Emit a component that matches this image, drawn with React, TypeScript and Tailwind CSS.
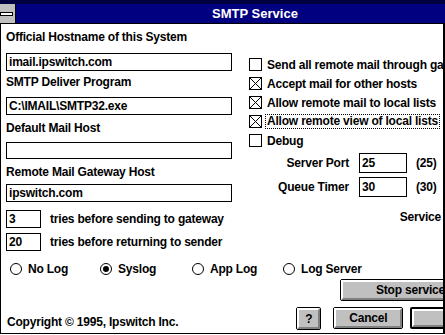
import React from "react";

function Box({ checked }: { checked?: boolean }) {
  return (
    <svg width="13" height="13" viewBox="0 0 13 13" className="shrink-0">
      <rect x="0.5" y="0.5" width="12" height="12" fill="white" stroke="black" />
      {checked && (
        <>
          <line x1="1" y1="1" x2="12" y2="12" stroke="black" strokeWidth="1" />
          <line x1="12" y1="1" x2="1" y2="12" stroke="black" strokeWidth="1" />
        </>
      )}
    </svg>
  );
}

function Radio({ on }: { on?: boolean }) {
  return (
    <svg width="12" height="12" viewBox="0 0 12 12" className="shrink-0">
      <circle cx="6" cy="6" r="5.5" fill="white" stroke="black" strokeWidth="1" />
      {on && <circle cx="6" cy="6" r="3" fill="black" />}
    </svg>
  );
}

function Field({ value, className }: { value?: string; className: string }) {
  return (
    <div className={`h-[18px] border border-black bg-white flex items-center pl-[2px] whitespace-nowrap ${className}`}>
      {value}
    </div>
  );
}

function Btn({ children, className, def }: { children?: React.ReactNode; className: string; def?: boolean }) {
  return (
    <div className={`${def ? "border-2" : "border"} border-black rounded-[2px] bg-[#c0c0c0] flex ${className}`}>
      <div className="flex-1 flex items-center border-2 border-t-white border-l-white border-r-[#808080] border-b-[#808080]">
        {children}
      </div>
    </div>
  );
}

export default function App() {
  return (
    <div className="w-[445px] h-[335px] overflow-hidden bg-white text-black font-bold text-[12px] leading-[14px] tracking-[-0.2px] font-['Liberation_Sans',Arial,sans-serif]">
      <div className="h-[4px] bg-[#000040]" />
      <div className="flex h-[19px] bg-[#000080]">
        <div className="w-[16px] h-full bg-[#c0c0c0] border-r border-black flex items-center">
          <div className="w-[13px] h-[4px] bg-white border border-black" />
        </div>
        <div className="flex-1 flex items-center justify-center pl-[49px] text-white text-[13px] tracking-[0px]">
          SMTP Service
        </div>
      </div>
      <div className="h-px bg-black" />
      <div className="h-[310px] border-l border-r-2 border-b border-black overflow-hidden flex flex-col">
        <div className="flex h-[227px]">
          <div className="w-[226px] ml-[5px] flex flex-col shrink-0">
            <div className="mt-[6px] h-[14px] whitespace-nowrap">Official Hostname of this System</div>
            <Field className="mt-[9px]" value="imail.ipswitch.com" />
            <div className="mt-[4px] h-[14px]">SMTP Deliver Program</div>
            <Field className="mt-[8px]" value="C:\IMAIL\SMTP32.exe" />
            <div className="mt-[6px] h-[14px]">Default Mail Host</div>
            <Field className="mt-[7px]" />
            <div className="mt-[6px] h-[14px]">Remote Mail Gateway Host</div>
            <Field className="mt-[5px]" value="ipswitch.com" />
            <div className="mt-[8px] flex items-center">
              <Field className="w-[35px]" value="3" />
              <span className="ml-[9px] whitespace-nowrap">tries before sending to gateway</span>
            </div>
            <div className="mt-[5px] flex items-center">
              <Field className="w-[35px]" value="20" />
              <span className="ml-[9px] whitespace-nowrap">tries before returning to sender</span>
            </div>
          </div>
          <div className="ml-[17px] flex-1 flex flex-col min-w-0">
            <div className="mt-[31px] h-[19px] flex items-center whitespace-nowrap">
              <Box />
              <span className="ml-[5px]">Send all remote mail through gateway</span>
            </div>
            <div className="h-[19px] flex items-center whitespace-nowrap">
              <Box checked />
              <span className="ml-[5px]">Accept mail for other hosts</span>
            </div>
            <div className="h-[19px] flex items-center whitespace-nowrap">
              <Box checked />
              <span className="ml-[5px]">Allow remote mail to local lists</span>
            </div>
            <div className="h-[19px] flex items-center whitespace-nowrap">
              <Box checked />
              <span className="ml-[3px] px-px border border-dotted border-black leading-[13px]">Allow remote view of local lists</span>
            </div>
            <div className="h-[19px] flex items-center whitespace-nowrap">
              <Box />
              <span className="ml-[5px]">Debug</span>
            </div>
            <div className="mt-[3px] h-[20px] flex items-center whitespace-nowrap">
              <span className="w-[100px] text-right">Server Port</span>
              <div className="ml-[10px] w-[48px] h-[20px] border border-black flex items-center pl-[2px]">25</div>
              <span className="ml-[9px]">(25)</span>
            </div>
            <div className="mt-[4px] h-[20px] flex items-center whitespace-nowrap">
              <span className="w-[100px] text-right">Queue Timer</span>
              <div className="ml-[10px] w-[48px] h-[20px] border border-black flex items-center pl-[2px]">30</div>
              <span className="ml-[9px]">(30)</span>
            </div>
            <div className="mt-[13px] h-[14px] text-right pr-[2px]">Service</div>
          </div>
        </div>
        <div className="mt-[10px] h-[16px] flex items-center pl-[9px] whitespace-nowrap">
          <div className="w-[90px] flex items-center"><Radio /><span className="ml-[6px]">No Log</span></div>
          <div className="w-[92px] flex items-center"><Radio on /><span className="ml-[6px]">Syslog</span></div>
          <div className="w-[91px] flex items-center"><Radio /><span className="ml-[6px]">App Log</span></div>
          <div className="flex items-center"><Radio /><span className="ml-[6px]">Log Server</span></div>
        </div>
        <div className="mt-[2px] flex">
          <Btn className="ml-[339px] w-[150px] h-[22px] shrink-0">
            <span className="pl-[33px] whitespace-nowrap">Stop service</span>
          </Btn>
        </div>
        <div className="mt-[6px] flex items-start">
          <div className="ml-[6px] mt-[8px] whitespace-nowrap">Copyright © 1995, Ipswitch Inc.</div>
          <Btn className="ml-[118px] w-[25px] h-[23px] shrink-0">
            <span className="w-full text-center">?</span>
          </Btn>
          <Btn className="ml-[12px] w-[70px] h-[22px] shrink-0">
            <span className="w-full text-center">Cancel</span>
          </Btn>
          <Btn def className="ml-[7px] w-[90px] h-[22px] shrink-0">
            <span className="w-full text-center">OK</span>
          </Btn>
        </div>
      </div>
    </div>
  );
}
